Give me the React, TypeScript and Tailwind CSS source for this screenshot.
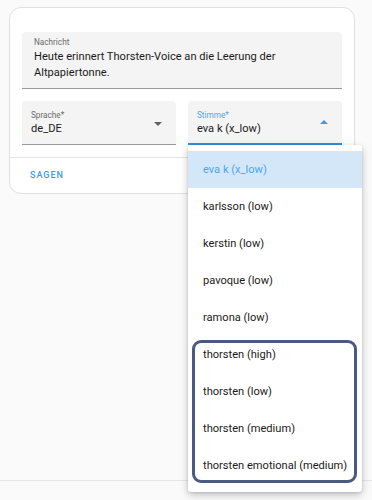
import React from "react";

const items = [
  "eva k (x_low)",
  "karlsson (low)",
  "kerstin (low)",
  "pavoque (low)",
  "ramona (low)",
  "thorsten (high)",
  "thorsten (low)",
  "thorsten (medium)",
  "thorsten emotional (medium)",
];

export default function App() {
  return (
    <div
      className="relative w-[372px] h-[500px] bg-[#fafafa] overflow-hidden"
      style={{ fontFamily: "Roboto, 'Liberation Sans', sans-serif" }}
    >
      <div className="pt-[7px] pl-[9px]">
        <div className="w-[346px] h-[187px] bg-white border border-[#e0e0e0] rounded-[12px] flex flex-col">
          <div className="px-[12px] pt-[24px] flex flex-col gap-[12px]">
            <div className="w-[320px] h-[57px] bg-[#f4f4f4] rounded-t-[4px] border-b border-[#9a9a9a] pl-[12px] pt-[4px]">
              <div className="text-[8.2px] leading-[12px] text-[#6b6b6b]">Nachricht</div>
              <div className="text-[11.1px] leading-[16px] text-[#1a1a1a] mt-[1px]">
                Heute erinnert Thorsten-Voice an die Leerung der Altpapiertonne.
              </div>
            </div>
            <div className="flex gap-[12px]">
              <div className="relative w-[154px] h-[44px] bg-[#f4f4f4] rounded-t-[4px] border-b border-[#9a9a9a] pl-[9px] pt-[9px]">
                <div className="text-[8.2px] leading-[11px] text-[#6b6b6b]">Sprache*</div>
                <div className="text-[11.1px] leading-[15px] text-[#1a1a1a]">de_DE</div>
                <div className="absolute right-[14px] top-[21px] w-0 h-0 border-l-[4px] border-r-[4px] border-t-[4px] border-l-transparent border-r-transparent border-t-[#616161]" />
              </div>
              <div className="relative w-[154px] h-[44px] bg-[#f4f4f4] rounded-t-[4px] border-b-2 border-[#2f8fe6] pl-[9px] pt-[9px]">
                <div className="text-[8.2px] leading-[11px] text-[#4ea5ef]">Stimme*</div>
                <div className="text-[11.1px] leading-[15px] text-[#1a1a1a]">eva k (x_low)</div>
                <div className="absolute right-[14px] top-[19px] w-0 h-0 border-l-[4px] border-r-[4px] border-b-[4px] border-l-transparent border-r-transparent border-b-[#3d9bec]" />
              </div>
            </div>
          </div>
          <div className="mt-[12px] border-t border-[#e4e4e4] flex-1 flex items-center pl-[20px] pt-[1px]">
            <span className="text-[9px] font-medium tracking-[1px] text-[#3d9bec]">SAGEN</span>
          </div>
        </div>
      </div>

      <div className="absolute left-0 right-0 top-[480px] border-t border-[#e6e6e6]" />

      <div className="absolute left-[188px] top-[145px] w-[174px] h-[347px] bg-white rounded-[3px] shadow-[0_3px_8px_rgba(0,0,0,0.22),0_1px_3px_rgba(0,0,0,0.12)] pt-[6px]">
        {items.map((it, i) => (
          <div
            key={it}
            className={
              i === 0
                ? "h-[37px] flex items-center pl-[15px] pt-[2px] text-[11.1px] bg-[#d4e7f8] text-[#4ea5ef]"
                : "h-[37px] flex items-center pl-[15px] pt-[2px] text-[11.1px] text-[#1a1a1a]"
            }
          >
            {it}
          </div>
        ))}
        <div className="absolute left-[4px] top-[195px] w-[165px] h-[143px] border-[3px] border-[#4a5a82] rounded-[9px]" />
      </div>
    </div>
  );
}
